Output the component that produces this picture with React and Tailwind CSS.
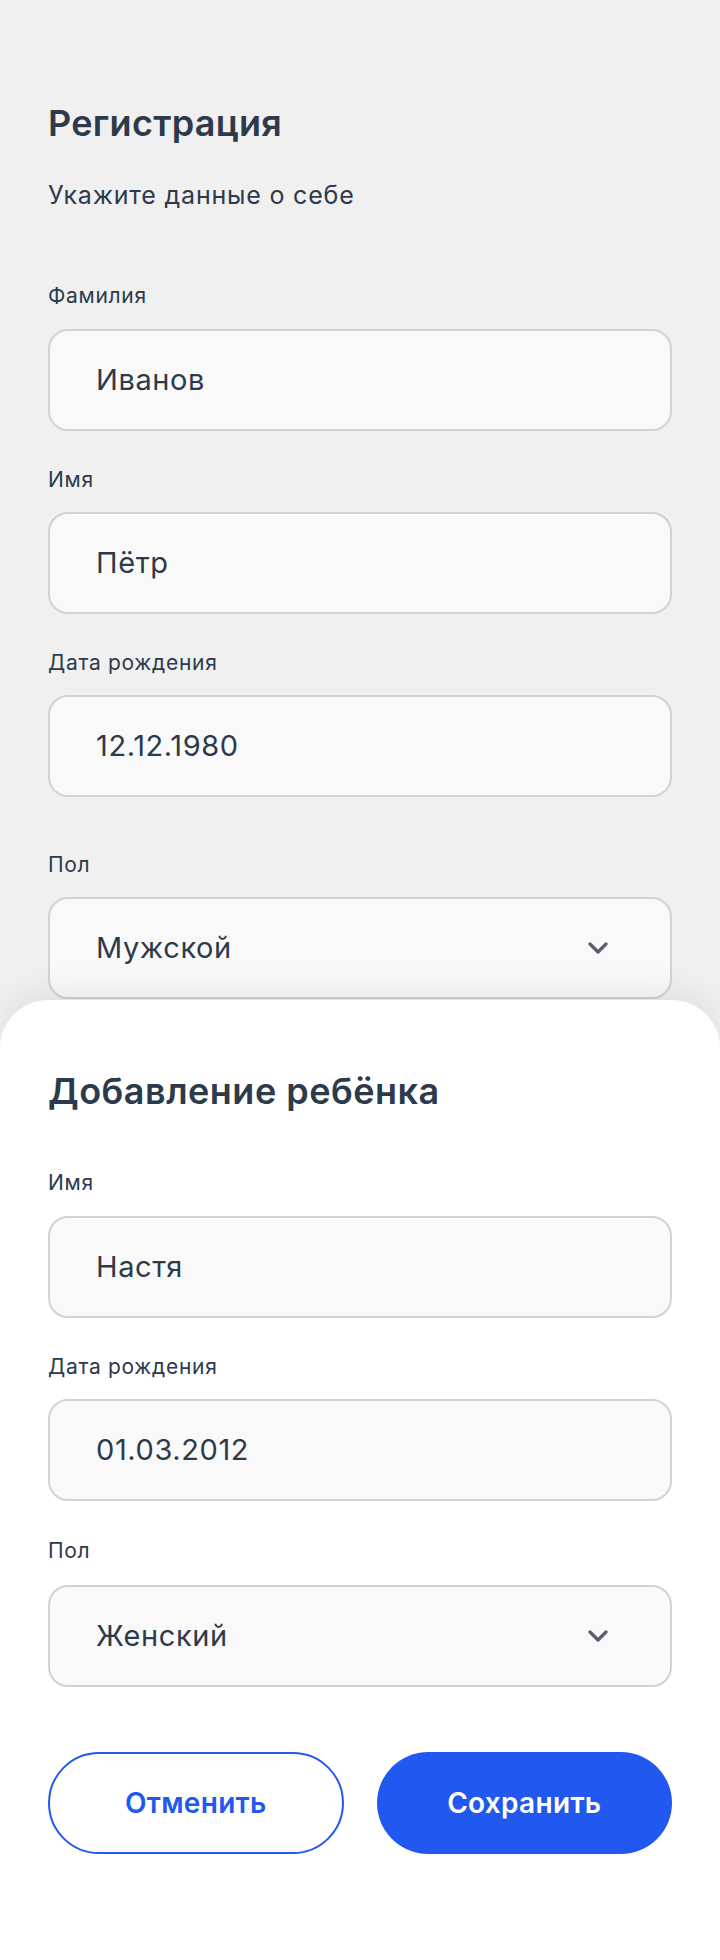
import React from "react";

const font = { fontFamily: '"Inter", "Noto Sans", sans-serif' };

function Label({ children, className = "" }) {
  return (
    <div className={"text-[21px] leading-[24px] tracking-[0.7px] text-[#2d3a4b] " + className}>{children}</div>
  );
}

function Field({ value, select = false, className = "" }) {
  return (
    <div
      className={
        "flex h-[102px] items-center justify-between rounded-[20px] border-2 border-[#d2d2d2] bg-[#f9f9f9] pl-[46px] pr-[62px] " +
        className
      }
    >
      <span className="text-[29px] leading-[34px] tracking-[0.6px] text-[#2d3a4b]">{value}</span>
      {select && (
        <svg width="20" height="12" viewBox="0 0 20 12" fill="none">
          <path d="M2 2l8 8 8-8" stroke="#5b5c74" strokeWidth="3.2" strokeLinecap="round" strokeLinejoin="round" />
        </svg>
      )}
    </div>
  );
}

export default function App() {
  return (
    <div className="flex w-[720px] min-h-[1960px] flex-col bg-[#f0f0f0]" style={font}>
      <div className="px-[48px] pt-[101px]">
        <h1 className="text-[36px] leading-[44px] font-semibold tracking-[0.3px] text-[#2d3a4b]">Регистрация</h1>
        <p className="mt-[34px] text-[25px] leading-[32px] tracking-[0.8px] text-[#2d3a4b]">Укажите данные о себе</p>
        <Label className="mt-[73px]">Фамилия</Label>
        <Field value="Иванов" className="mt-[21px]" />
        <Label className="mt-[37px]">Имя</Label>
        <Field value="Пётр" className="mt-[20px]" />
        <Label className="mt-[37px]">Дата рождения</Label>
        <Field value="12.12.1980" className="mt-[20px]" />
        <Label className="mt-[56px]">Пол</Label>
        <Field value="Мужской" select className="mt-[20px]" />
      </div>
      <div className="relative mt-px flex-1 rounded-t-[48px] bg-white px-[48px] pt-[69px] pb-[105px] shadow-[0_-12px_30px_rgba(0,0,0,0.06)]">
        <h2 className="text-[36px] leading-[44px] font-semibold tracking-[0.5px] text-[#2d3a4b]">Добавление ребёнка</h2>
        <Label className="mt-[58px]">Имя</Label>
        <Field value="Настя" className="mt-[21px]" />
        <Label className="mt-[37px]">Дата рождения</Label>
        <Field value="01.03.2012" className="mt-[20px]" />
        <Label className="mt-[38px]">Пол</Label>
        <Field value="Женский" select className="mt-[22px]" />
        <div className="mt-[65px] grid grid-cols-2 gap-[33px]">
          <button className="h-[102px] rounded-full border-2 border-[#2159f0] bg-white text-[28px] font-semibold tracking-[0.3px] text-[#2159f0]">
            Отменить
          </button>
          <button className="h-[102px] rounded-full bg-[#2159f0] text-[28px] font-semibold tracking-[0.3px] text-white">
            Сохранить
          </button>
        </div>
      </div>
    </div>
  );
}
